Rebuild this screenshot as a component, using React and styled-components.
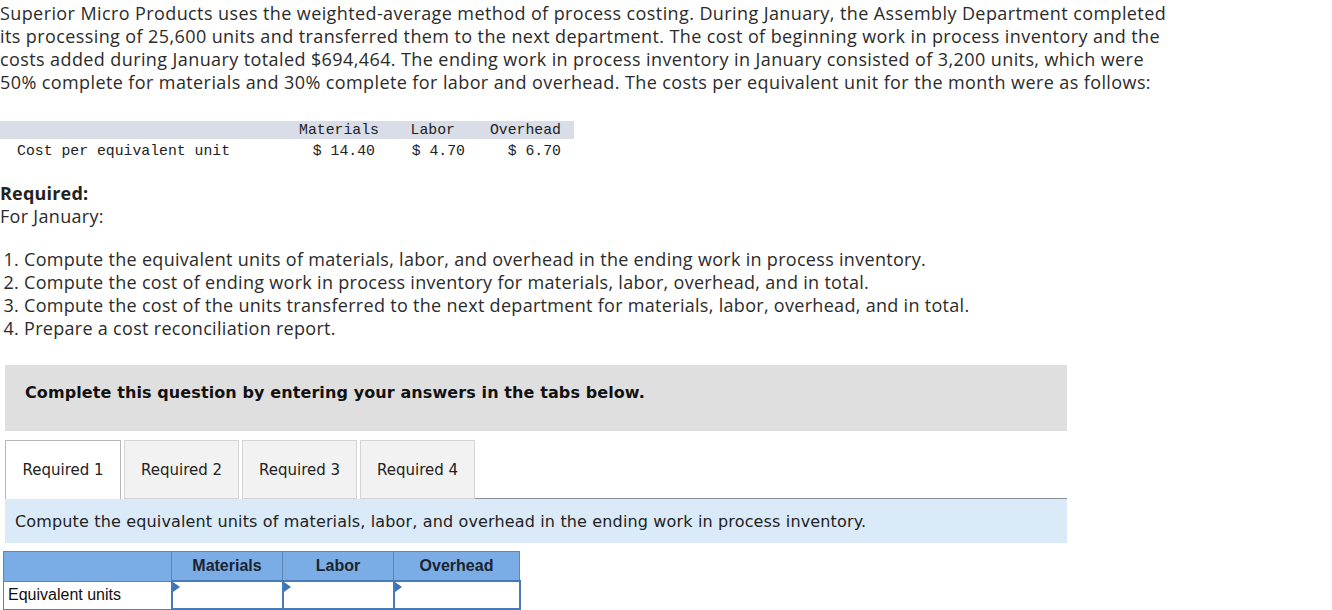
import React from 'react';
import styled, { createGlobalStyle } from 'styled-components';

const GlobalStyle = createGlobalStyle`
  body {
    margin: 0;
    background: #fff;
    font-family: "Open Sans", Arial, sans-serif;
    color: #2b2b2b;
  }
`;

const Page = styled.div`
  width: 1332px;
  height: 610px;
  overflow: hidden;
`;

const Intro = styled.p`
  margin: 0;
  padding-top: 2px;
  white-space: nowrap;
  font-size: 18px;
  line-height: 23px;
  letter-spacing: 0.4px;
`;

const CostTable = styled.table`
  margin-top: 27px;
  border-collapse: collapse;
  table-layout: fixed;
  width: 574px;
  font-family: "Liberation Mono", monospace;
  font-size: 14.8px;
  color: #222;
`;

const Col = styled.col`
  width: ${p => p.$w}px;
`;

const HeadCell = styled.th`
  background: #d9dde7;
  font-weight: normal;
  text-align: right;
  padding: 0 ${p => p.$pr || 0}px 0 0;
  height: 18px;
  line-height: 18px;
`;

const Cell = styled.td`
  text-align: ${p => (p.$label ? 'left' : 'right')};
  padding: 2px ${p => p.$pr || 0}px 0 ${p => (p.$label ? 17 : 0)}px;
  height: 19px;
  line-height: 18px;
`;

const Heading = styled.div`
  margin-top: 22px;
  font-size: 18px;
  line-height: 23px;
  letter-spacing: 0.2px;
  font-weight: 700;
  color: #222;
`;

const Sub = styled.div`
  font-size: 18px;
  line-height: 23px;
  letter-spacing: 0.3px;
`;

const Steps = styled.ol`
  margin: 20px 0 0;
  padding-left: 24px;
  font-size: 18px;
  line-height: 23px;
  letter-spacing: 0.3px;
`;

const Banner = styled.div`
  margin: 25px 0 0 5px;
  width: 1062px;
  height: 66px;
  background: #dfdfdf;
  padding: 18px 0 0 20px;
  box-sizing: border-box;
  font-family: "DejaVu Sans", Verdana, sans-serif;
  font-weight: 700;
  font-size: 16px;
  line-height: 20px;
  letter-spacing: 0.1px;
  color: #111;
`;

const TabRow = styled.div`
  margin: 9px 0 0 5px;
  width: 1062px;
  display: flex;
  align-items: flex-end;
  gap: 3px;
`;

const Tab = styled.div`
  height: 59px;
  width: ${p => p.$w}px;
  box-sizing: border-box;
  display: flex;
  align-items: center;
  justify-content: center;
  font-family: "DejaVu Sans", Verdana, sans-serif;
  font-size: 15px;
  color: #222;
  background: ${p => (p.$active ? '#fff' : '#f2f2f2')};
  border: 1px solid ${p => (p.$active ? '#b8b8b8' : '#d4d4d4')};
  border-bottom: ${p => (p.$active ? 'none' : '1px solid #d4d4d4')};
`;

const TabLine = styled.div`
  flex: 1;
  border-bottom: 1px solid #8c9298;
  margin-left: -3px;
`;

const Prompt = styled.div`
  margin-left: 5px;
  width: 1062px;
  height: 44px;
  background: #daeaf8;
  display: flex;
  align-items: center;
  padding-left: 10px;
  box-sizing: border-box;
  font-family: "DejaVu Sans", Verdana, sans-serif;
  font-size: 16px;
  letter-spacing: 0.15px;
  color: #222;
`;

const AnswerTable = styled.table`
  margin: 8px 0 0 3px;
  border-collapse: collapse;
  table-layout: fixed;
  width: 516px;
  border: 1px solid #6d7f92;
  font-family: "Liberation Sans", Arial, sans-serif;
  font-size: 16px;
  color: #111;

  th {
    background: #7aade6;
    border: 1px solid #5d86b5;
    height: 28px;
    padding: 0;
    font-weight: 700;
    color: #1b2430;
  }
  td {
    height: 26px;
    padding: 0;
    border: 1px solid #6d7f92;
  }
  td:first-child {
    padding-left: 4px;
  }
`;

const Entry = styled.td`
  position: relative;
  && {
    border: 2px solid #4879b8;
  }
  &::before {
    content: '';
    position: absolute;
    left: 0;
    top: 0;
    border-top: 5px solid transparent;
    border-bottom: 5px solid transparent;
    border-left: 7px solid #3e74b8;
  }
`;

const tabs = [
  { label: 'Required 1', w: 116 },
  { label: 'Required 2', w: 115 },
  { label: 'Required 3', w: 115 },
  { label: 'Required 4', w: 115 },
];

const costs = [
  { name: 'Materials', value: '$ 14.40', w: 142, hp: 8, vp: 12 },
  { name: 'Labor', value: '$ 4.70', w: 79, hp: 11, vp: 1 },
  { name: 'Overhead', value: '$ 6.70', w: 108, hp: 13, vp: 13 },
];

const answerCols = [
  { name: 'Materials', w: 111 },
  { name: 'Labor', w: 111 },
  { name: 'Overhead', w: 126 },
];

export default function App() {
  return (
    <Page>
      <GlobalStyle />
      <Intro>
        Superior Micro Products uses the weighted-average method of process costing. During January, the Assembly Department completed<br />
        its processing of 25,600 units and transferred them to the next department. The cost of beginning work in process inventory and the<br />
        costs added during January totaled $694,464. The ending work in process inventory in January consisted of 3,200 units, which were<br />
        50% complete for materials and 30% complete for labor and overhead. The costs per equivalent unit for the month were as follows:
      </Intro>

      <CostTable>
        <colgroup>
          <Col $w={245} />
          {costs.map(c => <Col key={c.name} $w={c.w} />)}
        </colgroup>
        <thead>
          <tr>
            <HeadCell />
            {costs.map(c => <HeadCell key={c.name} $pr={c.hp}>{c.name}</HeadCell>)}
          </tr>
        </thead>
        <tbody>
          <tr>
            <Cell $label>Cost per equivalent unit</Cell>
            {costs.map(c => <Cell key={c.name} $pr={c.vp}>{c.value}</Cell>)}
          </tr>
        </tbody>
      </CostTable>

      <Heading>Required:</Heading>
      <Sub>For January:</Sub>

      <Steps>
        <li>Compute the equivalent units of materials, labor, and overhead in the ending work in process inventory.</li>
        <li>Compute the cost of ending work in process inventory for materials, labor, overhead, and in total.</li>
        <li>Compute the cost of the units transferred to the next department for materials, labor, overhead, and in total.</li>
        <li>Prepare a cost reconciliation report.</li>
      </Steps>

      <Banner>Complete this question by entering your answers in the tabs below.</Banner>

      <TabRow>
        {tabs.map((t, i) => (
          <Tab key={t.label} $active={i === 0} $w={t.w}>{t.label}</Tab>
        ))}
        <TabLine />
      </TabRow>

      <Prompt>Compute the equivalent units of materials, labor, and overhead in the ending work in process inventory.</Prompt>

      <AnswerTable>
        <colgroup>
          <Col $w={168} />
          {answerCols.map(c => <Col key={c.name} $w={c.w} />)}
        </colgroup>
        <thead>
          <tr>
            <th />
            {answerCols.map(c => <th key={c.name}>{c.name}</th>)}
          </tr>
        </thead>
        <tbody>
          <tr>
            <td>Equivalent units</td>
            {answerCols.map(c => <Entry key={c.name} />)}
          </tr>
        </tbody>
      </AnswerTable>
    </Page>
  );
}
